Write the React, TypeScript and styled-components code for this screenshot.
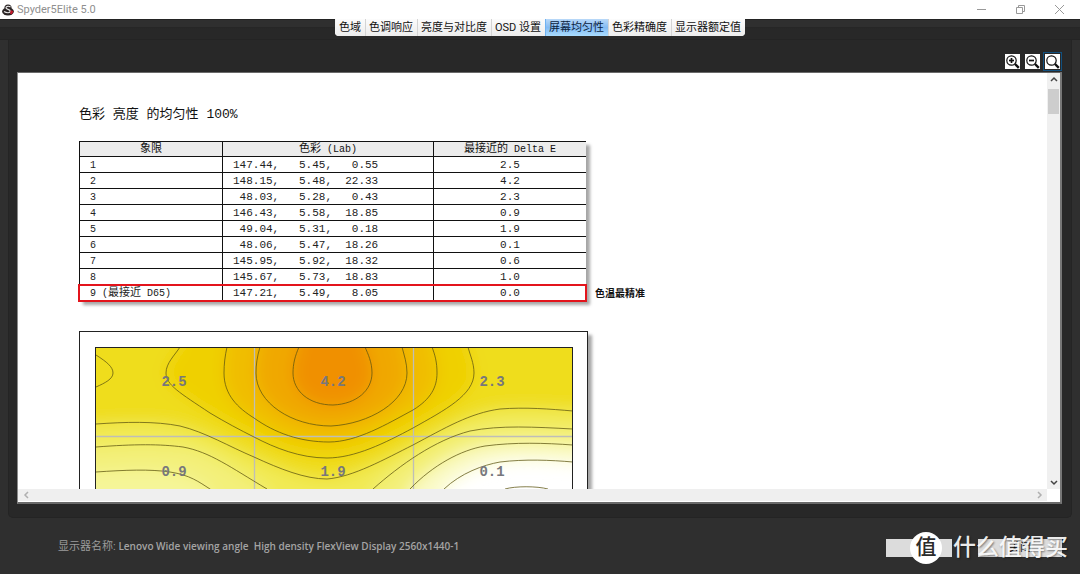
import React from 'react';
import styled, { createGlobalStyle, css } from 'styled-components';

const UI = `Roboto, "Noto Sans CJK SC", sans-serif`;
const MONO = `"Liberation Mono", "Noto Sans CJK SC", monospace`;

const GlobalStyle = createGlobalStyle`
  * { box-sizing: border-box; }
  body { margin: 0; background: #2f2f2f; font-family: ${UI}; }
  button { font: inherit; border: 0; padding: 0; margin: 0; }
`;

const Window = styled.div`
  display: flex;
  flex-direction: column;
  height: 100vh;
  min-width: 800px;
  background: #2f2f2f;
  overflow: hidden;
`;

const TitleBar = styled.header`
  display: flex;
  align-items: center;
  flex: none;
  height: 19px;
  padding: 0 14px 0 2px;
  gap: 3px;
  background: #fff;
  color: #8f8f8f;
`;

const AppName = styled.h1`
  margin: 0;
  flex: 1;
  font-size: 11px;
  line-height: 18px;
  font-weight: 400;
`;

const WindowControls = styled.div`
  display: flex;
  gap: 26px;
`;

const WindowButton = styled.button`
  display: flex;
  width: 13px;
  height: 13px;
  background: none;
`;

const TabStrip = styled.nav`
  display: flex;
  justify-content: center;
  align-items: flex-start;
  flex: none;
  height: 21px;
  background: linear-gradient(#232323 1px, #2f2f2f 1px, #2f2f2f 8px, #252525 8px, #282828 10px, #282828 20px, #242424 20px);
`;

const Tabs = styled.div`
  display: flex;
  overflow: hidden;
  border-radius: 0 0 4px 4px;
  background: #f2f2f2;
`;

const Tab = styled.button<{ $active?: boolean }>`
  height: 17px;
  padding: 0 4px 0 3px;
  border-left: 1px solid #d4d4d4;
  font-size: 11px;
  line-height: 17px;
  white-space: nowrap;
  color: #111;
  background: linear-gradient(#fcfcfc, #ececec);
  &:first-child { border-left-color: #f4f4f4; }
  ${p => p.$active && css`
    color: #0b2340;
    border-left-color: #6fb2f2;
    background: linear-gradient(#b9d9f8, #84bbf3 50%, #a9dcff);
  `}
`;

const Panel = styled.main`
  display: flex;
  flex-direction: column;
  flex: 1;
  min-height: 0;
  margin: 0 8px;
  padding: 0 9px 13px 8px;
  background: #282828;
  border: 1px solid #242424;
  border-top: 0;
  border-radius: 0 0 5px 5px;
`;

const Toolbar = styled.div`
  display: flex;
  justify-content: flex-end;
  align-items: center;
  flex: none;
  gap: 2px;
  height: 32px;
  padding-top: 10px;
`;

const ToolButton = styled.button<{ $focused?: boolean }>`
  display: flex;
  align-items: center;
  justify-content: center;
  width: ${p => (p.$focused ? 19 : 18)}px;
  height: 19px;
  background: none;
  border: 1px solid ${p => (p.$focused ? '#11507f' : 'transparent')};
`;

const Viewer = styled.section`
  display: grid;
  grid-template-columns: minmax(0, 1fr) 13px;
  grid-template-rows: minmax(0, 1fr) 13px;
  flex: 1;
  min-height: 0;
  background: #fff;
  border-style: solid;
  border-width: 1px 2px 2px 1px;
  border-color: #6a6a6a #777 #6a6a6a #8a8a8a;
`;

const Page = styled.article`
  overflow: hidden;
  padding: 33px 0 0 61px;
  color: #111;
`;

const Heading = styled.h2`
  margin: 0;
  font-family: ${MONO};
  font-size: 13px;
  line-height: 18px;
  font-weight: 400;
`;

const TableRow = styled.div`
  display: flex;
  align-items: flex-end;
  gap: 9px;
  margin-top: 17px;
`;

const DataTable = styled.table`
  width: 507px;
  flex: none;
  table-layout: fixed;
  border-collapse: separate;
  border-spacing: 0;
  border-top: 1px solid #111;
  background: #fff;
  box-shadow: 4px 4px 3px rgba(0, 0, 0, 0.35);
  font-family: ${MONO};
  font-size: 11px;
`;

const Cell = styled.td<{ $center?: boolean }>`
  height: 16px;
  padding: 2px 0 0 ${p => (p.$center ? 0 : 10)}px;
  border-left: 1px solid #111;
  border-bottom: 1px solid #111;
  line-height: 13px;
  white-space: pre;
  text-align: ${p => (p.$center ? 'center' : 'left')};
  color: #222;
`;

const HeadCell = styled.th`
  height: 15px;
  padding: 2px 0 0;
  border-left: 1px solid #111;
  border-bottom: 1px solid #111;
  background: #ececec;
  font-size: 10px;
  line-height: 12px;
  font-weight: 400;
`;

const Small = styled.span`
  font-size: 10px;
`;

const Han = styled.span`
  font-size: 11px;
  line-height: 10px;
`;

const Row = styled.tr<{ $marked?: boolean }>`
  ${p => p.$marked && css`
    outline: 2px solid #e3141c;
    outline-offset: -1px;
  `}
`;

const Note = styled.strong`
  font-size: 10px;
  line-height: 14px;
`;

const Figure = styled.figure`
  width: 509px;
  margin: 30px 0 0;
  padding: 15px 14px 15px 15px;
  border: 1px solid #222;
  background: #fff;
  box-shadow: 4px 4px 3px rgba(0, 0, 0, 0.35);
  svg { display: block; }
`;

const VScroll = styled.div`
  display: flex;
  flex-direction: column;
  align-items: center;
  background: #f0f0f0;
`;

const HScroll = styled.div`
  display: flex;
  justify-content: space-between;
  align-items: center;
  padding: 0 3px;
  background: #efefef;
  border-bottom: 1px solid #fff;
`;

const ArrowButton = styled.button`
  display: flex;
  align-items: center;
  justify-content: center;
  width: 11px;
  height: 12px;
  background: none;
`;

const Thumb = styled.div`
  width: 11px;
  height: 25px;
  margin: 4px 0 auto;
  background: #cdcdcd;
`;

const Footer = styled.footer`
  display: flex;
  justify-content: space-between;
  align-items: center;
  flex: none;
  height: 56px;
  padding: 0 11px 0 58px;
`;

const DisplayName = styled.p`
  margin: 0;
  font-size: 11px;
  line-height: 16px;
  white-space: pre;
  color: #9b9b9b;
  b {
    font-family: "Open Sans", "Noto Sans", sans-serif;
    font-size: 10px;
    font-weight: 600;
    color: #a4a4a4;
  }
`;

const Actions = styled.div`
  position: relative;
  display: flex;
  gap: 26px;
  padding: 3px 7px 0 0;
`;

const ActionButton = styled.button<{ $narrow?: boolean }>`
  width: ${p => (p.$narrow ? 66 : 84)}px;
  height: 18px;
  background: #dcdcdc;
  font-size: 11px;
  line-height: 18px;
  color: #111;
`;

const Watermark = styled.div`
  position: absolute;
  top: -4px;
  right: 1px;
  display: flex;
  align-items: center;
  gap: 11px;
  color: rgba(255, 255, 255, 0.92);
  font-size: 23px;
  line-height: 32px;
  font-weight: 500;
  white-space: nowrap;
  text-shadow: 1px 1px 2px rgba(0, 0, 0, 0.45);
`;

const Seal = styled.span`
  width: 32px;
  height: 32px;
  border-radius: 50%;
  background: #fff;
  color: #2b2b2b;
  font-size: 21px;
  line-height: 31px;
  text-align: center;
  text-shadow: none;
`;

const rows = [
  ['1', '147.44,   5.45,   0.55', '2.5'],
  ['2', '148.15,   5.48,  22.33', '4.2'],
  ['3', ' 48.03,   5.28,   0.43', '2.3'],
  ['4', '146.43,   5.58,  18.85', '0.9'],
  ['5', ' 49.04,   5.31,   0.18', '1.9'],
  ['6', ' 48.06,   5.47,  18.26', '0.1'],
  ['7', '145.95,   5.92,  18.32', '0.6'],
  ['8', '145.67,   5.73,  18.83', '1.0'],
  ['9', '147.21,   5.49,   8.05', '0.0'],
];

const tabs = ['色域', '色调响应', '亮度与对比度', 'OSD 设置', '屏幕均匀性', '色彩精确度', '显示器额定值'];

// Lowest level first: fill of the band, its closed area, and the contour line.
const contours = [
  ['#fafac8', 'M-30 300V-30H510V117L478 115C455 114 430 111 405 115C388 118 366 126 349 142L300 300Z', 'M478 115C455 113 430 112 405 115C388 118 366 126 349 142L310 200'],
  ['#f5f598', 'M-30 300V-30H510V98H478C450 96 420 95 390 99C366 103 338 118 315 142L270 300Z', 'M478 98C450 96 420 95 390 99C366 103 338 118 315 142L280 190'],
  ['#f3f07a', 'M-30 126L1 125C30 123 55 122 75 125C95 128 104 135 115 142L150 300H260L315 142C338 118 366 103 390 99C420 95 450 96 510 98V-30H-30Z', 'M1 125C30 123 55 122 75 125C95 128 104 135 115 142L140 160'],
  ['#f1ea54', 'M-30 100H1C40 97 65 97 88 100C115 105 135 120 172 142L200 300H240L278 142C305 118 340 93 375 84C405 78 440 80 510 82V-30H-30Z', 'M1 100C40 97 65 97 88 100C115 105 135 120 172 142M278 142C305 118 340 93 375 84C405 78 440 80 478 82'],
  ['#efdd1c', 'M-30 78L1 77C30 75 60 74 85 79C110 85 135 100 159 110C185 122 210 132 232 132C258 130 290 112 318 98C350 81 375 66 405 62C430 60 455 62 510 64V-30H-30Z', 'M1 77C30 75 60 74 85 79C110 85 135 100 159 110C185 122 210 132 232 132C258 130 290 112 318 98C350 81 375 66 405 62C430 60 455 62 478 64'],
  ['#efd000', 'M85 -30V0C80 8 71 16 71 26C71 38 85 46 115 66C130 75 145 83 159 90C180 101 205 111 232 111C260 111 290 96 318 81C350 63 379 48 379 26C379 16 375 8 373 0V-30Z', 'M85 0C80 8 71 16 71 26C71 38 85 46 115 66C130 75 145 83 159 90C180 101 205 111 232 111C260 111 290 96 318 81C350 63 379 48 379 26C379 16 375 8 373 0'],
  ['#f0bd00', 'M132 -30V0C130 9 129 17 129 26C129 48 143 61 159 71C180 86 205 95 234 95C262 95 292 77 318 63C336 52 342 40 342 26C342 15 340 8 337 0V-30Z', 'M132 0C130 9 129 17 129 26C129 48 143 61 159 71C180 86 205 95 234 95C262 95 292 77 318 63C336 52 342 40 342 26C342 15 340 8 337 0'],
  ['#f0a800', 'M165 -30V0C162 10 161 18 161 26C161 56 197 79 236 79C274 77 312 55 312 26C312 16 309 8 307 0V-30Z', 'M165 0C162 10 161 18 161 26C161 56 197 79 236 79C274 77 312 55 312 26C312 16 309 8 307 0'],
  ['#f09000', 'M204 -30V0C200 9 198 17 198 26C198 44 214 58 238 58C262 57 277 43 277 26C277 15 273 7 270 0V-30Z', 'M204 0C200 9 198 17 198 26C198 44 214 58 238 58C262 57 277 43 277 26C277 15 273 7 270 0'],
];

const cellLabels: [number, number, string][] = [
  [79, 39, '2.5'], [238, 39, '4.2'], [397, 39, '2.3'],
  [79, 129, '0.9'], [238, 129, '1.9'], [397, 129, '0.1'],
];

function UniformityMap() {
  return (
    <svg width="478" height="268" viewBox="0 0 478 268" role="img" aria-label="屏幕均匀性">
      <defs>
        <filter id="soft" filterUnits="userSpaceOnUse" x="-60" y="-60" width="600" height="380">
          <feGaussianBlur stdDeviation="8" />
        </filter>
      </defs>
      <rect width="478" height="268" fill="#fff" />
      <g filter="url(#soft)">
        {contours.map(([fill, area]) => <path key={fill} d={area} fill={fill} />)}
      </g>
      <path d="M159.500 0V268M318.500 0V268M0 89.500H478M0 178.500H478" fill="none" stroke="#bebeb8" strokeWidth="1.300" />
      <g fill="none" stroke="#5c5410" strokeOpacity="0.75">
        {contours.map(([fill, , line]) => <path key={fill} d={line} />)}
        <path d="M1 8C12 15 18 20 18 26C18 32 10 36 1 40M410 142C420 139 442 139 453 142" />
      </g>
      <g fill="#77777c" fontFamily='"Liberation Mono", monospace' fontSize="14" fontWeight="700" textAnchor="middle">
        {cellLabels.map(([x, y, t]) => <text key={`${x}-${y}`} x={x} y={y}>{t}</text>)}
      </g>
      <rect x="0.5" y="0.5" width="477" height="267" fill="none" stroke="#222" />
    </svg>
  );
}

function Lens({ sign }: { sign?: '+' | '-' }) {
  return (
    <svg width="15" height="15" viewBox="0 0 15 15" fill="none" stroke="#111">
      <rect width="15" height="15" fill="#fff" stroke="none" />
      <circle cx="6.500" cy="6.500" r="4.700" strokeWidth="1.200" />
      <path d="M10 10L13.800 13.800" strokeWidth="2.400" />
      {sign && <path d="M4 6.500H9" strokeWidth="1.700" />}
      {sign === '+' && <path d="M6.500 4V9" strokeWidth="1.700" />}
    </svg>
  );
}

function Chevron({ d, color = '#444' }: { d: string; color?: string }) {
  return (
    <svg width="8" height="8" viewBox="0 0 8 8" fill="none" stroke={color} strokeWidth="1.500">
      <path d={d} />
    </svg>
  );
}

export default function App() {
  return (
    <Window>
      <GlobalStyle />
      <TitleBar>
        <svg width="12" height="12" viewBox="0 0 12 12" fill="none">
          <ellipse cx="6" cy="7.500" rx="5.900" ry="4" fill="#2a2424" />
          <circle cx="6" cy="4" r="3.600" fill="#2a2424" />
          <path d="M8.500 3C7 1.800 3.800 2 4 3.900C4.200 5.600 8.300 5.300 8.300 7.300C8.300 9.200 4.600 9.200 2 7.600" stroke="#e8e8e8" strokeWidth="1.200" />
          <path d="M8.800 6L11.500 7.500L9.500 10.500L8 9.500Z" fill="#c3182c" />
        </svg>
        <AppName>Spyder5Elite 5.0</AppName>
        <WindowControls>
          <WindowButton aria-label="最小化">
            <svg width="13" height="13" stroke="#999"><path d="M2 6.500H11" /></svg>
          </WindowButton>
          <WindowButton aria-label="还原">
            <svg width="13" height="13" stroke="#999" fill="none"><path d="M2.500 4.500H8.500V10.500H2.500ZM4.500 4.500V2.500H10.500V8.500H8.500" /></svg>
          </WindowButton>
          <WindowButton aria-label="关闭窗口">
            <svg width="13" height="13" stroke="#999"><path d="M2 2L11 11M11 2L2 11" /></svg>
          </WindowButton>
        </WindowControls>
      </TitleBar>
      <TabStrip>
        <Tabs role="tablist">
          {tabs.map(t => (
            <Tab key={t} role="tab" $active={t === '屏幕均匀性'} aria-selected={t === '屏幕均匀性'}>{t}</Tab>
          ))}
        </Tabs>
      </TabStrip>
      <Panel>
        <Toolbar>
          <ToolButton aria-label="放大"><Lens sign="+" /></ToolButton>
          <ToolButton aria-label="缩小"><Lens sign="-" /></ToolButton>
          <ToolButton aria-label="实际大小" $focused><Lens /></ToolButton>
        </Toolbar>
        <Viewer>
          <Page>
            <Heading>色彩 亮度 的均匀性 100%</Heading>
            <TableRow>
              <DataTable>
                <colgroup>
                  <col style={{ width: 143 }} />
                  <col style={{ width: 211 }} />
                  <col />
                </colgroup>
                <thead>
                  <tr>
                    <HeadCell scope="col"><Han>象限</Han></HeadCell>
                    <HeadCell scope="col"><Han>色彩</Han> (Lab)</HeadCell>
                    <HeadCell scope="col"><Han>最接近的</Han> Delta E</HeadCell>
                  </tr>
                </thead>
                <tbody>
                  {rows.map(([n, lab, delta]) => (
                    <Row key={n} $marked={n === '9'}>
                      <Cell><Small>{n}{n === '9' && <> (<Han>最接近</Han> D65)</>}</Small></Cell>
                      <Cell>{lab}</Cell>
                      <Cell $center>{delta}</Cell>
                    </Row>
                  ))}
                </tbody>
              </DataTable>
              <Note>色温最精准</Note>
            </TableRow>
            <Figure><UniformityMap /></Figure>
          </Page>
          <VScroll>
            <ArrowButton aria-label="向上"><Chevron d="M1 6L4 3L7 6" /></ArrowButton>
            <Thumb />
            <ArrowButton aria-label="向下"><Chevron d="M1 2L4 5L7 2" /></ArrowButton>
          </VScroll>
          <HScroll>
            <ArrowButton aria-label="向左"><Chevron d="M5 1L2 4L5 7" color="#b0b0b0" /></ArrowButton>
            <ArrowButton aria-label="向右"><Chevron d="M3 1L6 4L3 7" color="#b0b0b0" /></ArrowButton>
          </HScroll>
        </Viewer>
      </Panel>
      <Footer>
        <DisplayName>显示器名称: <b>Lenovo Wide viewing angle  High density FlexView Display 2560x1440-1</b></DisplayName>
        <Actions>
          <ActionButton $narrow aria-label="打印" />
          <ActionButton>关闭</ActionButton>
          <Watermark><Seal>值</Seal>什么值得买</Watermark>
        </Actions>
      </Footer>
    </Window>
  );
}
